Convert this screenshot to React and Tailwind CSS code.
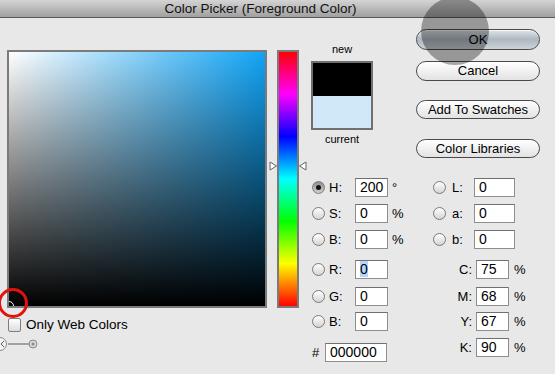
import React from "react";

const FONT = { fontFamily: '"Liberation Sans", Arial, sans-serif' };

function Radio({ checked }) {
  return (
    <div
      className={
        "w-[13px] h-[13px] rounded-full border border-[#7a7a7a] flex items-center justify-center shrink-0 " +
        (checked
          ? "bg-linear-to-b from-[#8f8f8f] to-[#d0d0d0]"
          : "bg-linear-to-b from-[#ffffff] to-[#d4d4d4]")
      }
    >
      {checked && <div className="w-[5px] h-[5px] rounded-full bg-[#111]" />}
    </div>
  );
}

function Input({ value, w = "w-[33px]", selected }) {
  return (
    <div
      className={
        w +
        " h-[19px] bg-white border border-[#8e8e8e] border-t-[#6f6f6f] pl-[4px] text-[14px] leading-[17px] text-black shrink-0"
      }
    >
      {selected ? <span className="bg-[#b4d4fe]">{value}</span> : value}
    </div>
  );
}

function LeftRow({ label, value, unit, checked, selected, mt }) {
  return (
    <div className={"flex items-center h-[19px] " + mt}>
      <div className="ml-[13px]">
        <Radio checked={checked} />
      </div>
      <div className="ml-[4px] w-[26px] text-[13px]">{label}</div>
      <Input value={value} selected={selected} />
      {unit && <div className="ml-[4px] text-[13px]">{unit}</div>}
    </div>
  );
}

function LabRow({ label, value, mt }) {
  return (
    <div className={"flex items-center h-[19px] " + mt}>
      <Radio />
      <div className="ml-[6px] w-[22px] text-[13px]">{label}</div>
      <Input value={value} w="w-[41px]" />
    </div>
  );
}

function CmykRow({ label, value, mt }) {
  return (
    <div className={"flex items-center h-[19px] " + mt}>
      <div className="w-[41px] text-right pr-[2px] text-[13px]">{label}</div>
      <div className="ml-[2px]">
        <Input value={value} />
      </div>
      <div className="ml-[5px] text-[13px]">%</div>
    </div>
  );
}

function Button({ children, h, mt, primary }) {
  return (
    <div
      className={
        "w-[124px] rounded-full border border-[#4a4a4a] flex items-center justify-center text-[13px] text-black shadow-[inset_0_1px_0_rgba(255,255,255,0.8)] " +
        h +
        " " +
        mt +
        " " +
        (primary
          ? "bg-linear-to-b from-[#dfe4e8] via-[#aeb8c0] to-[#cdd4d9]"
          : "bg-linear-to-b from-[#ffffff] via-[#f1f1f1] to-[#e2e2e2]")
      }
    >
      {children}
    </div>
  );
}

export default function App() {
  return (
    <div
      className="relative w-[555px] h-[374px] bg-[#e8e8e8] overflow-hidden text-black"
      style={FONT}
    >
      {/* Title bar */}
      <div className="h-[18px] bg-linear-to-b from-[#d4d4d4] to-[#a0a0a0] border-b border-[#5a5a5a] text-center pr-[34px] text-[13.5px] leading-[17px] text-[#111]">
        Color Picker (Foreground Color)
      </div>

      <div className="flex">
        {/* Left column */}
        <div className="w-[299px] shrink-0 pl-[7px] pt-[32px]">
          <div className="flex">
            <div className="relative w-[260px] h-[258px] border-2 border-[#7b7b7b] overflow-hidden bg-[#10a4f6]">
              <div className="absolute inset-0 bg-linear-to-r from-white to-white/0" />
              <div className="absolute inset-0 bg-linear-to-b from-black/0 to-black" />
              <div className="absolute left-[-5px] bottom-[-5px] w-[10px] h-[10px] rounded-full border border-white" />
            </div>
            <div className="relative ml-[10px] w-[22px] h-[258px] border-2 border-[#7b7b7b] bg-[linear-gradient(to_bottom,#ff0000,#ff00ff,#0000ff,#00ffff,#00ff00,#ffff00,#ff0000)]">
              <svg
                className="absolute left-[-10px] top-[109px]"
                width="9"
                height="10"
                viewBox="0 0 9 10"
              >
                <path d="M1 1 L7.5 5 L1 9 Z" fill="#fff" stroke="#666" strokeWidth="1" />
              </svg>
              <svg
                className="absolute right-[-10px] top-[109px]"
                width="9"
                height="10"
                viewBox="0 0 9 10"
              >
                <path d="M8 1 L1.5 5 L8 9 Z" fill="#fff" stroke="#666" strokeWidth="1" />
              </svg>
            </div>
          </div>
          <div className="flex items-center mt-[10px] ml-[1px] h-[14px]">
            <div className="w-[13px] h-[14px] rounded-[2px] border border-[#7d7d7d] bg-linear-to-b from-white to-[#dcdcdc]" />
            <div className="ml-[5px] text-[13.5px]">Only Web Colors</div>
          </div>
          <svg className="ml-[-14px] mt-[4px] block" width="50" height="16" viewBox="0 0 50 16">
            <circle cx="7" cy="8" r="6.5" fill="#f2f2f2" stroke="#8a8a8a" />
            <path d="M11 5 L8 8 L11 11" fill="none" stroke="#555" strokeWidth="1" />
            <line x1="15" y1="8" x2="37" y2="8" stroke="#8a8a8a" strokeWidth="1.5" />
            <circle cx="40" cy="8" r="4" fill="#d8d8d8" stroke="#8a8a8a" />
            <circle cx="40" cy="8" r="1.5" fill="#8a8a8a" />
          </svg>
        </div>

        {/* Right area */}
        <div className="flex-1">
          <div className="h-[160px] flex">
            <div className="ml-[12px] w-[62px] flex flex-col items-center">
              <div className="mt-[25px] h-[13px] text-[11px] leading-[13px]">new</div>
              <div className="mt-[5px] w-[62px] h-[69px] border-2 border-[#707070] flex flex-col">
                <div className="h-[33px] bg-black" />
                <div className="flex-1 bg-[#d0e8f7]" />
              </div>
              <div className="mt-[3px] text-[11px] leading-[13px]">current</div>
            </div>
            <div className="ml-[43px] flex flex-col">
              <Button h="h-[21px]" mt="mt-[11px]" primary>
                OK
              </Button>
              <Button h="h-[20px]" mt="mt-[11px]">
                Cancel
              </Button>
              <Button h="h-[19px]" mt="mt-[19px]">
                Add To Swatches
              </Button>
              <Button h="h-[19px]" mt="mt-[20px]">
                Color Libraries
              </Button>
            </div>
          </div>

          <div className="flex">
            <div className="w-[134px] flex flex-col">
              <LeftRow label="H:" value="200" unit="°" checked mt="" />
              <LeftRow label="S:" value="0" unit="%" mt="mt-[7px]" />
              <LeftRow label="B:" value="0" unit="%" mt="mt-[7px]" />
              <LeftRow label="R:" value="0" selected mt="mt-[11px]" />
              <LeftRow label="G:" value="0" mt="mt-[8px]" />
              <LeftRow label="B:" value="0" mt="mt-[6px]" />
              <div className="flex items-center h-[19px] mt-[12px]">
                <div className="ml-[13px] w-[13px] text-[13px]">#</div>
                <Input value="000000" w="w-[62px]" />
              </div>
            </div>
            <div className="flex flex-col">
              <LabRow label="L:" value="0" mt="" />
              <LabRow label="a:" value="0" mt="mt-[7px]" />
              <LabRow label="b:" value="0" mt="mt-[7px]" />
              <CmykRow label="C:" value="75" mt="mt-[11px]" />
              <CmykRow label="M:" value="68" mt="mt-[8px]" />
              <CmykRow label="Y:" value="67" mt="mt-[6px]" />
              <CmykRow label="K:" value="90" mt="mt-[7px]" />
            </div>
          </div>
        </div>
      </div>

      {/* Overlays: click highlight and annotation circle */}
      <div className="absolute left-[421px] top-[-3px] w-[68px] h-[68px] rounded-full bg-black/35 pointer-events-none" />
      <div className="absolute left-[-2px] top-[288px] w-[30px] h-[30px] rounded-full border-[3px] border-[#e3120e] pointer-events-none" />
    </div>
  );
}
